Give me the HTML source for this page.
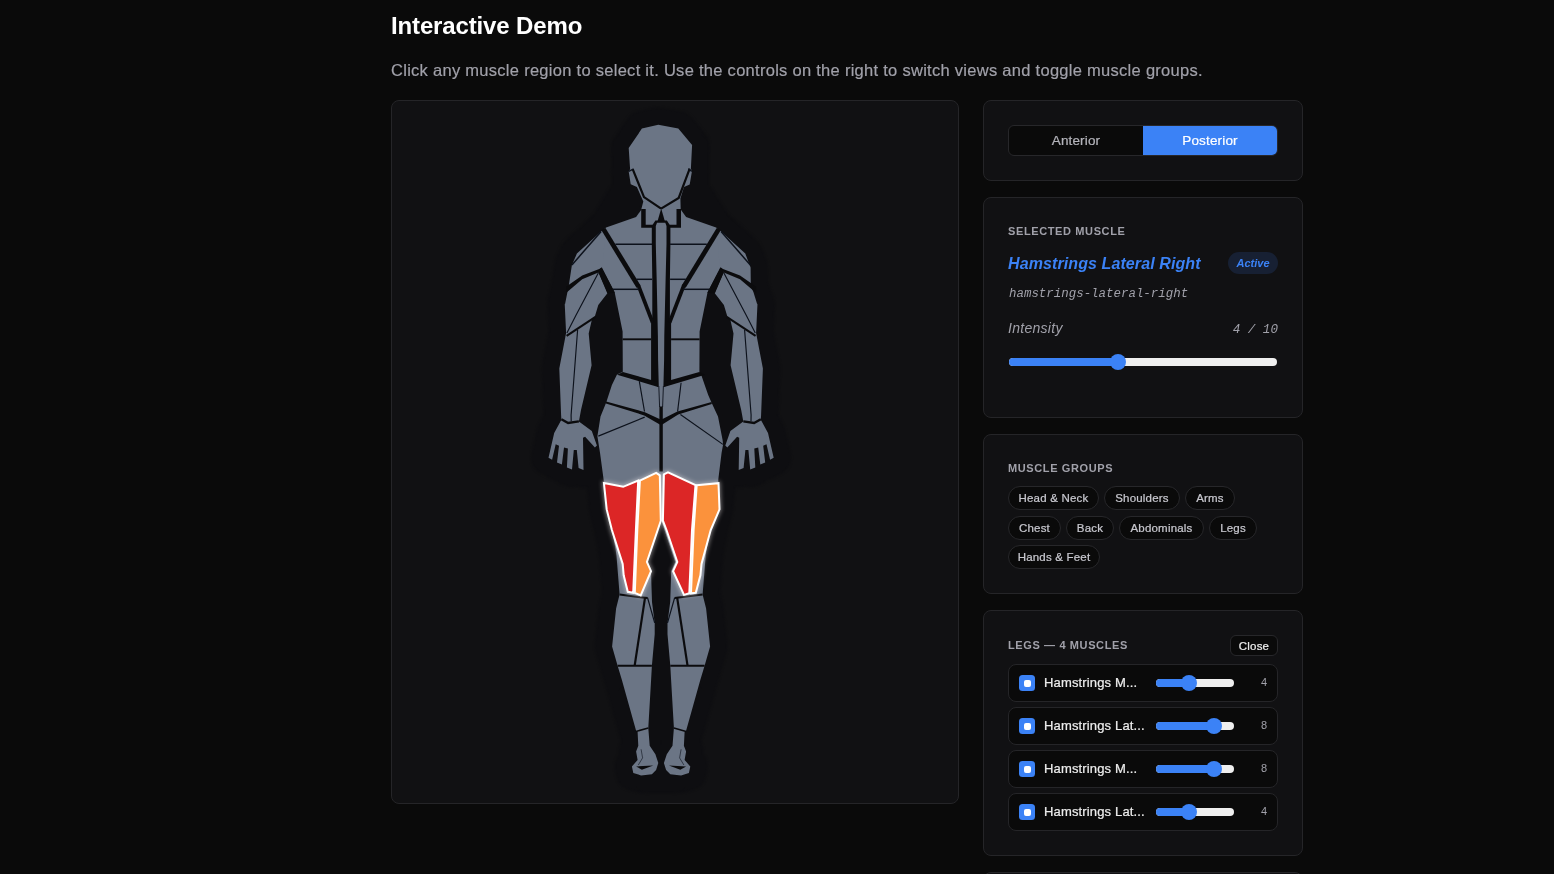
<!DOCTYPE html>
<html lang="en">
<head>
<meta charset="utf-8">
<title>Interactive Demo</title>
<style>
*{box-sizing:border-box;margin:0;padding:0}
html,body{width:1554px;height:874px;overflow:hidden;background:#0a0a0a}
body{position:relative;font-family:"Liberation Sans",sans-serif;color:#ededed;-webkit-font-smoothing:antialiased}
.abs{position:absolute;white-space:nowrap}
h2.title{left:391px;top:11px;font-size:24px;line-height:30px;font-weight:700;color:#fff;letter-spacing:-0.14px}
p.sub{-webkit-text-stroke:0.18px currentColor;left:391px;top:59px;font-size:16.5px;line-height:22px;color:#a1a1aa;letter-spacing:0.28px}
.card{position:absolute;background:#111113;border:1px solid #252528;border-radius:8px}
.stage{left:391px;top:100px;width:568px;height:704px}
.c1{left:983px;top:100px;width:320px;height:81px}
.c2{left:983px;top:197px;width:320px;height:221px}
.c3{left:983px;top:434px;width:320px;height:160px}
.c4{left:983px;top:610px;width:320px;height:246px}
.c5{left:983px;top:872px;width:320px;height:60px}
.toggle{left:1008px;top:125px;width:270px;height:31px;border:1px solid #27272a;border-radius:6px;background:#0a0a0a;overflow:hidden}
.toggle span{position:absolute;top:0;height:29px;width:134px;text-align:center;font-size:13.5px;line-height:29px;font-weight:400;color:#b4b4bb;letter-spacing:0.15px}
.toggle .a{left:0}
.toggle .b{left:134px;background:#3b82f6;color:#fff}
.lbl{font-size:11px;line-height:14px;font-weight:700;letter-spacing:0.62px;color:#a1a1aa;text-transform:uppercase}
.mname{left:1008px;top:253px;font-size:16px;line-height:22px;font-weight:700;font-style:italic;color:#3b82f6;letter-spacing:0.1px}
.badge{left:1228px;top:252px;width:50px;height:22px;border-radius:11px;background:#172033;color:#3b82f6;font-size:11px;line-height:22px;font-weight:700;font-style:italic;text-align:center}
.mono{font-family:"Liberation Mono",monospace;font-style:italic;color:#a1a1aa}
.mid{left:1009px;top:286px;font-size:12.45px;line-height:16px}
.inten{left:1008px;top:319px;font-size:14px;line-height:18px;font-style:italic;color:#a1a1aa;letter-spacing:0.28px}
.ival{left:1178px;width:100px;text-align:right;top:322px;font-size:12.6px;line-height:16px}
.track{position:absolute;height:8px;border-radius:4px;background:#efefef;overflow:hidden}
.track i{position:absolute;left:0;top:0;height:8px;background:#3b82f6}
.thumb{position:absolute;width:16px;height:16px;border-radius:8px;background:#3b82f6}
.chip{position:absolute;height:24px;border:1px solid #27272a;border-radius:12px;background:#0a0a0a;color:#c8c8cf;font-size:11.5px;letter-spacing:0.2px;line-height:22px;text-align:center;white-space:nowrap}
.close{left:1230px;top:635px;width:48px;height:21px;border:1px solid #27272a;border-radius:6px;background:#0a0a0a;color:#ededed;font-size:11.5px;letter-spacing:0.2px;line-height:21px;text-align:center}
.row{position:absolute;left:1008px;width:270px;height:38px;border:1px solid #252528;border-radius:8px;background:#0a0a0a}
.cb{position:absolute;left:10px;top:10px;width:16px;height:16px;border-radius:3.5px;background:#3b82f6}
.cb:after{content:"";position:absolute;left:4.5px;top:4.5px;width:7px;height:7px;border-radius:2px;background:#fff}
.rl,.chip,.close,.toggle span{-webkit-text-stroke:0.22px currentColor}
.rl{position:absolute;left:35px;top:9px;font-size:13px;letter-spacing:0.15px;line-height:18px;color:#ededed;white-space:nowrap}
.rv{position:absolute;right:10px;top:10px;font-size:11px;line-height:14px;color:#a1a1aa}
.row .track{left:147px;top:14px;width:78px}
.row .thumb{top:10px}
svg.body{position:absolute;left:0;top:0}
</style>
</head>
<body>
<div id="app" style="position:absolute;left:0;top:0;width:1554px;height:874px;will-change:transform">
<h2 class="abs title">Interactive Demo</h2>
<p class="abs sub">Click any muscle region to select it. Use the controls on the right to switch views and toggle muscle groups.</p>

<div class="card stage"></div>
<svg class="body" width="1554" height="874" viewBox="0 0 1554 874">
<defs><filter id="glow" x="-30%" y="-30%" width="160%" height="160%"><feGaussianBlur stdDeviation="2.3"/></filter><filter id="hb" x="-20%" y="-20%" width="140%" height="140%" color-interpolation-filters="sRGB"><feGaussianBlur stdDeviation="1.2"/></filter></defs>
<g fill="#0e0e11" stroke="#0e0e11" stroke-width="35" stroke-linejoin="round" filter="url(#hb)">
<polygon points="658.3,124.7 678.3,128.6 692.1,145 690.9,168.6 691.9,171.4 689.7,184.6 684,187.1 680.4,198.6 680.7,210 641.1,210 643.3,201.4 636.9,187.1 630.7,184.3 628.7,171.4 630.1,169.3 628.7,147.9 641.9,128.6"/>
<polygon points="661.1,208.6 641.1,210 636.1,217.1 606.1,227.4 605.4,227.9 601.1,231.4 601.8,268.3 614.7,292.5 622.6,331.4 622.8,371.7 617,374.4 611.9,385 606.2,402.5 600.5,416.6 597.4,436.2 600,452.7 603.6,479.4 603.9,482.9 606.7,509.4 611.9,530 615.5,548.5 616.5,555.7 619.6,594.4 616.1,608.6 612.1,646.4 617.6,665.7 621.9,680 636.1,730.7 637.6,732.1 638.3,745.7 636.1,751.4 637.6,760 631.9,766.4 633.3,772.9 641.1,775.4 651.9,774.3 656.1,770 658.3,762.9 655.4,754.3 649.7,745.7 648.3,727.9 651.1,680 651.9,665.7 654.7,634.3 654.7,622.9 652,602.1 651,571.2 646.9,561.9 657.7,530 660.8,520.7 661.1,521 661.1,208.5"/>
<polygon points="661.1,208.6 681.1,210 686.1,217.1 716.1,227.4 716.8,227.9 721.1,231.4 720.4,268.3 707.5,292.5 699.6,331.4 699.4,371.7 701.7,376.2 704.7,385 708.2,395 711.7,403 718,416.6 722.6,440 723.1,444.4 721.6,452.7 718.3,479.4 718.3,482.9 715.5,509.4 710.3,530 706.7,548.5 705.7,555.7 702.6,594.4 706.1,608.6 710.1,646.4 704.6,665.7 700.3,680 686.1,730.7 684.6,732.1 683.9,745.7 686.1,751.4 684.6,760 690.3,766.4 688.9,772.9 681.1,775.4 670.3,774.3 666.1,770 663.9,762.9 666.8,754.3 672.5,745.7 673.9,727.9 671.1,680 670.3,665.7 667.5,634.3 667.5,622.9 670.2,602.1 671.2,571.2 675.3,561.9 664.5,530 661.4,520.7 661.1,521 661.1,208.5"/>
<polygon points="605.4,227.9 601.1,231.4 576.9,253.6 571.9,265 569,284.3 565,304.3 564.7,303.6 566.1,332.9 559.3,368.6 561.1,414.9 561.4,419.7 554.2,433.1 548.5,457.8 552.1,459.7 555.7,444.2 559,445.7 557,462.4 561.9,464.5 564,447.5 567.9,448.5 566.9,467.6 572,469.6 573.8,450.1 576.8,450.1 578.6,468.1 583.5,470 583,437.7 585.1,436.7 594.9,447.5 596.9,445.5 591.8,431 578.9,421.6 581,410 591.6,365.3 588.7,333.4 591.8,320 594.7,317.1 598.3,305 607.6,292.9 607.6,293.1 598.6,272.5 602.5,268"/>
<polygon points="716.8,227.9 721.1,231.4 745.3,253.6 750.6,267.4 750.8,285.9 753.4,292.1 757.2,304.3 757.5,303.6 756.1,332.9 762.9,368.6 761.1,414.9 760.8,419.7 768,433.1 773.7,457.8 770.1,459.7 766.5,444.2 763.2,445.7 765.2,462.4 760.3,464.5 758.2,447.5 754.3,448.5 755.3,467.6 750.2,469.6 748.4,450.1 745.4,450.1 743.6,468.1 738.7,470 739.2,437.7 737.1,436.7 727.3,447.5 725.3,445.5 730.4,431 743.3,421.6 741.2,410 730.6,365.3 733.5,333.4 730.4,320 727.5,317.1 723.9,305 714.6,292.9 714.6,293.1 723.6,272.5 719.7,268"/>
<polygon points="629,150 692,150 692,190 716,228 606,228 629,190"/>
<polygon points="633,700 689,700 672,776 650,776"/>
</g>
<g fill="#6b7585">
<polygon points="658.3,124.7 678.3,128.6 692.1,145 690.9,168.6 691.9,171.4 689.7,184.6 684,187.1 680.4,198.6 680.7,210 641.1,210 643.3,201.4 636.9,187.1 630.7,184.3 628.7,171.4 630.1,169.3 628.7,147.9 641.9,128.6"/>
<polygon points="661.1,208.6 641.1,210 636.1,217.1 606.1,227.4 605.4,227.9 601.1,231.4 601.8,268.3 614.7,292.5 622.6,331.4 622.8,371.7 617,374.4 611.9,385 606.2,402.5 600.5,416.6 597.4,436.2 600,452.7 603.6,479.4 603.9,482.9 606.7,509.4 611.9,530 615.5,548.5 616.5,555.7 619.6,594.4 616.1,608.6 612.1,646.4 617.6,665.7 621.9,680 636.1,730.7 637.6,732.1 638.3,745.7 636.1,751.4 637.6,760 631.9,766.4 633.3,772.9 641.1,775.4 651.9,774.3 656.1,770 658.3,762.9 655.4,754.3 649.7,745.7 648.3,727.9 651.1,680 651.9,665.7 654.7,634.3 654.7,622.9 652,602.1 651,571.2 646.9,561.9 657.7,530 660.8,520.7 661.1,521 661.1,208.5"/>
<polygon points="661.1,208.6 681.1,210 686.1,217.1 716.1,227.4 716.8,227.9 721.1,231.4 720.4,268.3 707.5,292.5 699.6,331.4 699.4,371.7 701.7,376.2 704.7,385 708.2,395 711.7,403 718,416.6 722.6,440 723.1,444.4 721.6,452.7 718.3,479.4 718.3,482.9 715.5,509.4 710.3,530 706.7,548.5 705.7,555.7 702.6,594.4 706.1,608.6 710.1,646.4 704.6,665.7 700.3,680 686.1,730.7 684.6,732.1 683.9,745.7 686.1,751.4 684.6,760 690.3,766.4 688.9,772.9 681.1,775.4 670.3,774.3 666.1,770 663.9,762.9 666.8,754.3 672.5,745.7 673.9,727.9 671.1,680 670.3,665.7 667.5,634.3 667.5,622.9 670.2,602.1 671.2,571.2 675.3,561.9 664.5,530 661.4,520.7 661.1,521 661.1,208.5"/>
<polygon points="605.4,227.9 601.1,231.4 576.9,253.6 571.9,265 569,284.3 565,304.3 564.7,303.6 566.1,332.9 559.3,368.6 561.1,414.9 561.4,419.7 554.2,433.1 548.5,457.8 552.1,459.7 555.7,444.2 559,445.7 557,462.4 561.9,464.5 564,447.5 567.9,448.5 566.9,467.6 572,469.6 573.8,450.1 576.8,450.1 578.6,468.1 583.5,470 583,437.7 585.1,436.7 594.9,447.5 596.9,445.5 591.8,431 578.9,421.6 581,410 591.6,365.3 588.7,333.4 591.8,320 594.7,317.1 598.3,305 607.6,292.9 607.6,293.1 598.6,272.5 602.5,268"/>
<polygon points="716.8,227.9 721.1,231.4 745.3,253.6 750.6,267.4 750.8,285.9 753.4,292.1 757.2,304.3 757.5,303.6 756.1,332.9 762.9,368.6 761.1,414.9 760.8,419.7 768,433.1 773.7,457.8 770.1,459.7 766.5,444.2 763.2,445.7 765.2,462.4 760.3,464.5 758.2,447.5 754.3,448.5 755.3,467.6 750.2,469.6 748.4,450.1 745.4,450.1 743.6,468.1 738.7,470 739.2,437.7 737.1,436.7 727.3,447.5 725.3,445.5 730.4,431 743.3,421.6 741.2,410 730.6,365.3 733.5,333.4 730.4,320 727.5,317.1 723.9,305 714.6,292.9 714.6,293.1 723.6,272.5 719.7,268"/>
</g>
<g fill="#0b0b0d">
<polygon points="641.2,209 645.7,209 645.7,224.8 653,224.8 653,227.7 641.2,227.7"/>
<polygon points="681,209 676.5,209 676.5,224.8 669.2,224.8 669.2,227.7 681,227.7"/>
<polygon points="661.2,208.4 664.8,221 657.6,221"/>
<polygon points="655.4,220.4 666.9,220.4 670.4,226 670.4,244 669.9,280 669.9,321 671.1,323 671.1,381 664.7,386.7 657.5,386.7 651.1,381 651.1,323 652.3,321 652.3,280 651.8,244 651.8,226"/>
<polygon points="566,286.8 582.2,275.6 601.8,267.9 598.4,272.4 582.2,279.2 566,293"/>
<polygon points="756.2,286.8 740,275.6 720.4,267.9 723.8,272.4 740,279.2 756.2,293"/>
<polygon points="601.8,267.2 614.9,292.8 607.4,293.4 598.4,272.2 600,268.6"/>
<polygon points="720.4,267.2 707.3,292.8 714.8,293.4 723.8,272.2 722.2,268.6"/>
<polygon points="622.9,371.9 651.2,380 658,382 658,386.9 617.1,374.8"/>
<polygon points="699.3,371.9 671,380 664.2,382 664.2,386.9 705.1,374.8"/>
<polygon points="606.1,401.6 644.9,412.2 661.1,419.8 677.4,411.5 711.6,402 711.8,403.9 678.2,414.6 661.1,425.2 644.2,415.4 605.9,403.6"/>
<polygon points="636.1,766.4 653.3,765.4 641.9,769.7"/>
<polygon points="686.1,766.4 668.9,765.4 680.3,769.7"/>
</g>
<polygon points="657,222.8 665.3,222.8 666.5,226 666.5,244 665.6,280 664.3,336 664.1,360 663.4,387 662.6,407 659.6,407 658.8,387 658.1,360 657.9,336 656.7,280 655.8,244 655.8,226" fill="#6b7585"/>
<g fill="none" stroke="#0b0b0d" stroke-linejoin="miter" stroke-linecap="butt">
<polyline points="632.6,168.9 644,197.1 661.1,208.6" stroke-width="2.2"/>
<polyline points="689.7,168.6 678.7,197.9 661.1,208.6" stroke-width="2.2"/>
<polyline points="628.7,171.4 633.3,169.1" stroke-width="1.3" stroke="#0c111b"/>
<polyline points="691.9,171.4 688.3,168.9" stroke-width="1.3" stroke="#0c111b"/>
<polyline points="658.8,386 659.6,407" stroke-width="0.9" stroke="#0c111b"/>
<polyline points="663.4,386 662.6,407" stroke-width="0.9" stroke="#0c111b"/>
<polyline points="603.3,228.9 638.5,286.6" stroke-width="4.7"/>
<polyline points="718.9,228.9 683.7,286.6" stroke-width="4.7"/>
<polyline points="638.2,285 652.6,322.5" stroke-width="3.7"/>
<polyline points="684,285 669.6,322.5" stroke-width="3.7"/>
<polyline points="615.4,244.3 652.1,244.3" stroke-width="1.5" stroke="#0c111b"/>
<polyline points="706.8,244.3 670.1,244.3" stroke-width="1.5" stroke="#0c111b"/>
<polyline points="636.4,279.3 652.1,279.3" stroke-width="1.5" stroke="#0c111b"/>
<polyline points="685.8,279.3 670.1,279.3" stroke-width="1.5" stroke="#0c111b"/>
<polyline points="612.6,289.3 639.3,289.3" stroke-width="1.5" stroke="#0c111b"/>
<polyline points="709.6,289.3 682.9,289.3" stroke-width="1.5" stroke="#0c111b"/>
<polyline points="601.1,231.4 571.9,265" stroke-width="1.5" stroke="#0c111b"/>
<polyline points="721.1,231.4 750.3,265" stroke-width="1.5" stroke="#0c111b"/>
<polyline points="598.3,272.9 576.1,314.9 566.9,332.9" stroke-width="1.15" stroke="#0c111b"/>
<polyline points="723.9,272.9 746.1,314.9 755.3,332.9" stroke-width="1.15" stroke="#0c111b"/>
<polyline points="595.5,316.8 566.6,335.8" stroke-width="2.1"/>
<polyline points="726.7,316.8 755.6,335.8" stroke-width="2.1"/>
<polyline points="577.6,330 571.1,414.9 571.2,421.3" stroke-width="1.15" stroke="#0c111b"/>
<polyline points="744.6,330 751.1,414.9 751,421.3" stroke-width="1.15" stroke="#0c111b"/>
<polyline points="561.4,419.2 568.1,423 578.9,421.4" stroke-width="2.4"/>
<polyline points="760.8,419.2 754.1,423 743.3,421.4" stroke-width="2.4"/>
<polyline points="622.6,339.3 651.1,339.3" stroke-width="1.9"/>
<polyline points="699.6,339.3 671.1,339.3" stroke-width="1.9"/>
<polyline points="639.3,381.2 644.5,411.5" stroke-width="1.15" stroke="#0c111b"/>
<polyline points="681.1,382.8 677.6,411.5" stroke-width="1.15" stroke="#0c111b"/>
<polyline points="661.1,406.5 661.1,471.5" stroke-width="3.4"/>
<polyline points="598.3,436.1 644.7,417.1" stroke-width="1.15" stroke="#0c111b"/>
<polyline points="680.4,414.5 722.9,444.4" stroke-width="1.15" stroke="#0c111b"/>
<polyline points="619.7,594.6 647.6,598.1" stroke-width="2.0"/>
<polyline points="702.5,594.6 674.6,598.1" stroke-width="2.0"/>
<polyline points="645,597.9 634.7,665.4" stroke-width="2.2"/>
<polyline points="677.2,597.9 687.5,665.4" stroke-width="2.2"/>
<polyline points="647.6,597.9 654.7,622.9" stroke-width="1.2" stroke="#0c111b"/>
<polyline points="674.6,597.9 667.5,622.9" stroke-width="1.2" stroke="#0c111b"/>
<polyline points="617.6,665.7 651.9,665.7" stroke-width="2.1"/>
<polyline points="704.6,665.7 670.3,665.7" stroke-width="2.1"/>
<polyline points="636.1,731.4 648.3,727.9" stroke-width="1.6"/>
<polyline points="686.1,731.4 673.9,727.9" stroke-width="1.6"/>
<polyline points="641.1,749.3 642.6,757.9 638.3,765" stroke-width="0.6" stroke="#0c111b"/>
<polyline points="681.1,749.3 679.6,757.9 683.9,765" stroke-width="0.6" stroke="#0c111b"/>
</g>
<g filter="url(#glow)" fill="#f4eeee" stroke="#f4eeee" stroke-width="3.5" opacity="0.5">
<polygon points="603.9,482.9 623.2,486.8 638.2,480.6 635.9,530 633.2,592.8 627.8,591.8 623.7,575.3 622.7,564 611.9,530 606.7,509.4"/>
<polygon points="639.9,480.6 656.2,472.9 659.8,475.4 660.8,520.7 657.7,530 646.9,561.9 651,571.2 640.7,595.4 634.8,592.8 637.3,530"/>
<polygon points="663.9,474.4 668,472.4 695.5,485.2 692,530 689.3,593.3 684,594.9 673.1,571.2 677.3,561.9 666.5,530 662.9,520.7"/>
<polygon points="696.7,485.2 718.5,483.2 719.5,509.4 710.7,530 701.5,564 700.4,575.3 695.8,592.8 691,593.3 693.6,530"/>
</g>
<g stroke="#fff" stroke-width="2" stroke-linejoin="miter">
<polygon points="603.9,482.9 623.2,486.8 638.2,480.6 635.9,530 633.2,592.8 627.8,591.8 623.7,575.3 622.7,564 611.9,530 606.7,509.4" fill="#dc2626"/>
<polygon points="639.9,480.6 656.2,472.9 659.8,475.4 660.8,520.7 657.7,530 646.9,561.9 651,571.2 640.7,595.4 634.8,592.8 637.3,530" fill="#fb923c"/>
<polygon points="663.9,474.4 668,472.4 695.5,485.2 692,530 689.3,593.3 684,594.9 673.1,571.2 677.3,561.9 666.5,530 662.9,520.7" fill="#dc2626"/>
<polygon points="696.7,485.2 718.5,483.2 719.5,509.4 710.7,530 701.5,564 700.4,575.3 695.8,592.8 691,593.3 693.6,530" fill="#fb923c"/>
</g>
</svg>

<div class="card c1"></div>
<div class="abs toggle"><span class="a">Anterior</span><span class="b">Posterior</span></div>

<div class="card c2"></div>
<div class="abs lbl" style="left:1008px;top:224px">Selected Muscle</div>
<div class="abs mname">Hamstrings Lateral Right</div>
<div class="abs badge">Active</div>
<div class="abs mono mid">hamstrings-lateral-right</div>
<div class="abs inten">Intensity</div>
<div class="abs mono ival">4 / 10</div>
<div class="track" style="left:1009px;top:358px;width:268px"><i style="width:109px"></i></div>
<div class="thumb" style="left:1110px;top:354px"></div>

<div class="card c3"></div>
<div class="abs lbl" style="left:1008px;top:461px">Muscle Groups</div>
<div class="chip" style="left:1008px;top:486px;width:91px">Head &amp; Neck</div>
<div class="chip" style="left:1104px;top:486px;width:76px">Shoulders</div>
<div class="chip" style="left:1185px;top:486px;width:50px">Arms</div>
<div class="chip" style="left:1008px;top:516px;width:53px">Chest</div>
<div class="chip" style="left:1066px;top:516px;width:48px">Back</div>
<div class="chip" style="left:1119px;top:516px;width:85px">Abdominals</div>
<div class="chip" style="left:1209px;top:516px;width:48px">Legs</div>
<div class="chip" style="left:1008px;top:545px;width:92px">Hands &amp; Feet</div>

<div class="card c4"></div>
<div class="abs lbl" style="left:1008px;top:638px">Legs — 4 Muscles</div>
<div class="abs close">Close</div>
<div class="row" style="top:664px"><span class="cb"></span><span class="rl">Hamstrings M...</span><div class="track"><i style="width:33px"></i></div><div class="thumb" style="left:171.8px"></div><span class="rv">4</span></div>
<div class="row" style="top:707px"><span class="cb"></span><span class="rl">Hamstrings Lat...</span><div class="track"><i style="width:58px"></i></div><div class="thumb" style="left:196.6px"></div><span class="rv">8</span></div>
<div class="row" style="top:750px"><span class="cb"></span><span class="rl">Hamstrings M...</span><div class="track"><i style="width:58px"></i></div><div class="thumb" style="left:196.6px"></div><span class="rv">8</span></div>
<div class="row" style="top:793px"><span class="cb"></span><span class="rl">Hamstrings Lat...</span><div class="track"><i style="width:33px"></i></div><div class="thumb" style="left:171.8px"></div><span class="rv">4</span></div>

<div class="card c5"></div>
</div>
</body>
</html>
